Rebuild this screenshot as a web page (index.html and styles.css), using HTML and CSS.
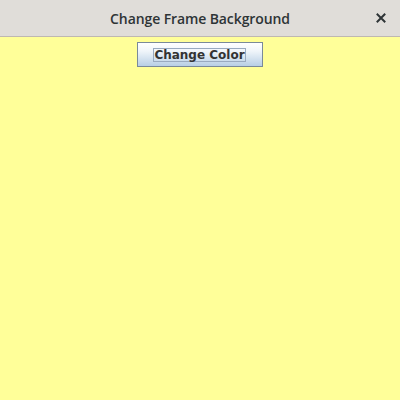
FILE: index.html
```html
<!DOCTYPE html>
<html>
<head>
<meta charset="utf-8">
<link rel="stylesheet" href="styles.css">
</head>
<body>
<div class="window">
  <div class="titlebar">
    <span class="title">Change Frame Background</span>
    <span class="close"><svg width="10" height="10" viewBox="0 0 10 10"><path d="M1.5 1.5 L8.5 8.5 M8.5 1.5 L1.5 8.5" stroke="#2e3436" stroke-width="2" stroke-linecap="square"/></svg></span>
  </div>
  <div class="content">
    <button class="btn"><span class="focus">Change Color</span></button>
  </div>
</div>
</body>
</html>
```
FILE: styles.css
```css
html, body { margin: 0; padding: 0; }
body { width: 400px; height: 400px; overflow: hidden; background: #ffff99; }
.window { display: flex; flex-direction: column; height: 400px; }
.titlebar {
  height: 37px;
  box-sizing: border-box;
  border-bottom: 1px solid #bfb8b1;
  background: #e0ddd9;
  display: flex;
  align-items: center;
  justify-content: center;
  position: relative;
  font-family: "Open Sans", sans-serif;
  font-weight: 600;
  font-size: 14px;
  color: #2e3436;
}
.title { letter-spacing: -0.1px; }
.close { position: absolute; right: 14px; top: 13px; width: 10px; height: 10px; display: flex; }
.content { flex: 1; background: #ffff99; display: flex; justify-content: center; align-items: flex-start; padding-top: 5px; }
.btn {
  width: 126px; height: 25px;
  box-sizing: border-box;
  margin: 0 0 0 -1px; padding: 0;
  border: 1px solid #7a8a99;
  background: linear-gradient(#ffffff 0%, #f0f5fa 35%, #b8cfe5 100%);
  display: flex; align-items: center; justify-content: center;
  font-family: "DejaVu Sans", sans-serif;
  font-weight: bold;
  font-size: 12px;
  color: #333333;
}
.focus { border: 1px solid #99aac0; padding: 0 0; line-height: 12px; }
```
